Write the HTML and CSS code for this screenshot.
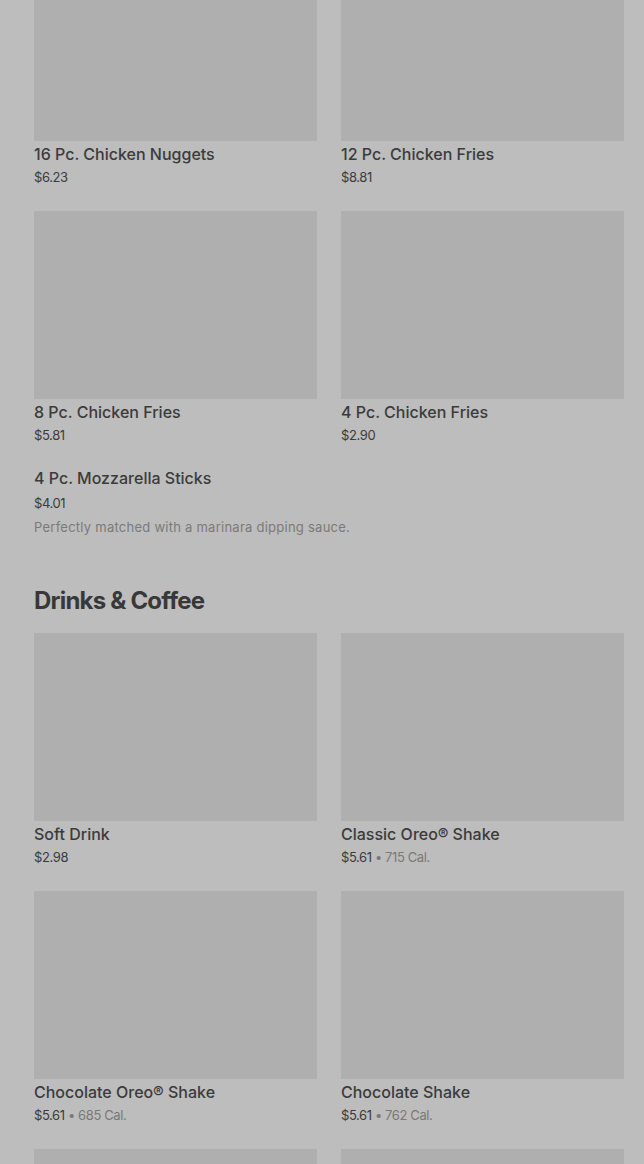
FILE: index.html
```html
<!DOCTYPE html>
<html lang="en">
<head>
<meta charset="utf-8">
<title>Menu</title>
<link rel="stylesheet" href="styles.css">
</head>
<body>
<main class="menu">
  <section class="section section--scrolled">
    <div class="grid">
      <div class="card">
        <div class="card__img"></div>
        <div class="card__title">16 Pc. Chicken Nuggets</div>
        <div class="card__meta">$6.23</div>
      </div>
      <div class="card">
        <div class="card__img"></div>
        <div class="card__title">12 Pc. Chicken Fries</div>
        <div class="card__meta">$8.81</div>
      </div>
      <div class="card">
        <div class="card__img"></div>
        <div class="card__title">8 Pc. Chicken Fries</div>
        <div class="card__meta">$5.81</div>
      </div>
      <div class="card">
        <div class="card__img"></div>
        <div class="card__title">4 Pc. Chicken Fries</div>
        <div class="card__meta">$2.90</div>
      </div>
    </div>
    <div class="item">
      <div class="item__title">4 Pc. Mozzarella Sticks</div>
      <div class="item__price">$4.01</div>
      <div class="item__desc">Perfectly matched with a marinara dipping sauce.</div>
    </div>
  </section>

  <section class="section">
    <h2 class="section__title">Drinks &amp; Coffee</h2>
    <div class="grid">
      <div class="card">
        <div class="card__img"></div>
        <div class="card__title">Soft Drink</div>
        <div class="card__meta">$2.98</div>
      </div>
      <div class="card">
        <div class="card__img"></div>
        <div class="card__title">Classic Oreo® Shake</div>
        <div class="card__meta">$5.61 <span class="cal">• 715 Cal.</span></div>
      </div>
      <div class="card">
        <div class="card__img"></div>
        <div class="card__title">Chocolate Oreo® Shake</div>
        <div class="card__meta">$5.61 <span class="cal">• 685 Cal.</span></div>
      </div>
      <div class="card">
        <div class="card__img"></div>
        <div class="card__title">Chocolate Shake</div>
        <div class="card__meta">$5.61 <span class="cal">• 762 Cal.</span></div>
      </div>
      <div class="card">
        <div class="card__img"></div>
      </div>
      <div class="card">
        <div class="card__img"></div>
      </div>
    </div>
  </section>
</main>
</body>
</html>
```

FILE: styles.css
```css
html, body {
  margin: 0;
  padding: 0;
  background: #bebebe;
  overflow: hidden;
}

body {
  font-family: Inter, "Noto Sans", "Liberation Sans", sans-serif;
  color: #3a3a3a;
}

.menu {
  padding: 0 20px 0 34px;
  background: #bdbdbd;
  width: 590px;
  margin-top: -47px;
}

.grid {
  display: grid;
  grid-template-columns: 283px 283px;
  column-gap: 24px;
  row-gap: 24px;
}

.card__img {
  height: 188px;
  background: #afafaf;
}

.card__title {
  margin-top: 2px;
  font-size: 16px;
  line-height: 22px;
  font-weight: 500;
  color: #3b3b3b;
  letter-spacing: 0;
}

.card__meta {
  margin-top: 2px;
  font-size: 13px;
  line-height: 20px;
  color: #3b3b3b;
  letter-spacing: -0.4px;
}

.cal {
  color: #797979;
}

.item {
  margin-top: 22px;
}

.item__title {
  font-size: 16px;
  line-height: 22px;
  font-weight: 500;
  color: #3b3b3b;
  letter-spacing: 0;
}

.item__price {
  margin-top: 4px;
  font-size: 13px;
  line-height: 20px;
  color: #3b3b3b;
  letter-spacing: -0.4px;
}

.item__desc {
  margin-top: 4px;
  font-size: 13px;
  line-height: 20px;
  color: #7a7a7a;
  letter-spacing: 0.25px;
}

.section__title {
  margin: 48px 0 16px;
  font-size: 24px;
  line-height: 32px;
  font-weight: 700;
  color: #383838;
  letter-spacing: -0.8px;
}
```
